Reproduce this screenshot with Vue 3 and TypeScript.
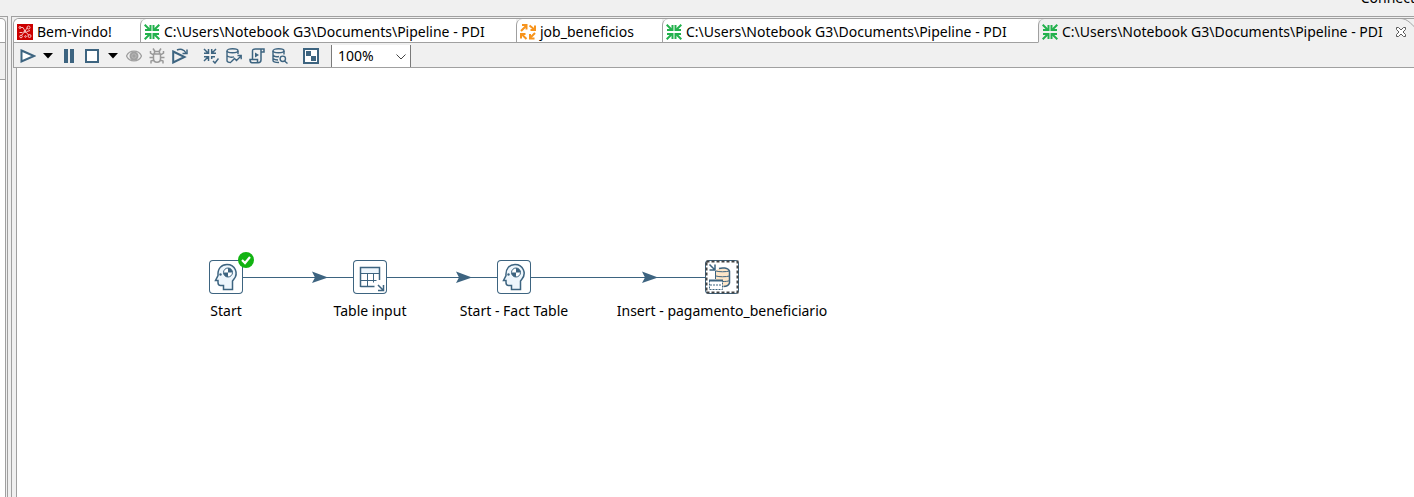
<script setup lang="ts">
import { ref } from 'vue'

type TabKind = 'welcome' | 'trans' | 'job'
interface Tab { label: string; kind: TabKind; size: string; closable?: boolean }
interface Step { label: string; icon: 'head' | 'table' | 'insert'; x: number; ok?: boolean }

const path = 'C:\\Users\\Notebook G3\\Documents\\Pipeline - PDI'
const tabs: Tab[] = [
  { label: 'Bem-vindo!', kind: 'welcome', size: 'first' },
  { label: path, kind: 'trans', size: 'path' },
  { label: 'job_beneficios', kind: 'job', size: 'job' },
  { label: path, kind: 'trans', size: 'path' },
  { label: path, kind: 'trans', size: 'last', closable: true },
]
const active = ref(4)
const zoom = ref('100%')

const steps: Step[] = [
  { label: 'Start', icon: 'head', x: 192, ok: true },
  { label: 'Table input', icon: 'table', x: 336 },
  { label: 'Start - Fact Table', icon: 'head', x: 480 },
  { label: 'Insert - pagamento_beneficiario', icon: 'insert', x: 688 },
]
const hops = [
  { from: 226, to: 336, tip: 311 },
  { from: 370, to: 480, tip: 455 },
  { from: 514, to: 688, tip: 641 },
]
</script>

<template>
  <div class="app">
    <header class="perspective"><span>Connect</span></header>
    <div class="body">
      <aside class="side">
        <div class="side-tab"></div>
        <div class="side-tools"></div>
        <div class="side-view"></div>
      </aside>
      <main class="editor">
        <nav class="tabs" aria-label="Editors">
          <button
            v-for="(tab, i) in tabs" :key="i" type="button"
            :class="['tab', tab.size, { active: active === i }]" @click="active = i"
          >
            <svg v-if="tab.kind === 'welcome'" width="16" height="16" viewBox="0 0 16 16">
              <path d="M0 0h16v16H0z" fill="#cc0000" />
              <g fill="none" stroke="#f7c4c4" stroke-width="1">
                <path d="M3.500 3.500h2.500l2 3.500M8 7l2.500-3.500M8 7l-3.500 4.500M8 7l4 4.500M2.500 8.500h3M10 7.500l3-1" />
                <circle cx="3" cy="3.500" r="1" /><circle cx="11.500" cy="3.500" r="1.500" />
                <circle cx="4" cy="12.500" r="1.300" /><circle cx="12.500" cy="12" r="1.500" /><circle cx="8" cy="7.500" r="1" /><circle cx="8.500" cy="12.500" r=".8" />
              </g>
            </svg>
            <svg v-else-if="tab.kind === 'trans'" width="16" height="16" viewBox="0 0 16 16" fill="none" stroke="#22b14c" stroke-width="2">
              <path d="M.7.7L6 6M15.300.7L10 6M.7 15.300L6 10M15.300 15.300L10 10" />
              <path d="M1 6h5.500V1M15 6H9.500V1M1 10h5.500v5M15 10H9.500v5" />
            </svg>
            <svg v-else width="16" height="16" viewBox="0 0 16 16" fill="none" stroke="#f7941d" stroke-width="2">
              <path d="M1 7L6 2M9.500 1.500L15 6M15 9L10 14M6.500 15L1.500 10" />
              <path d="M2 1h4.500v4.500M15 1.500V6h-4.500M14.500 14.500H10V10M1 14.500V10h4.500" />
            </svg>
            <span>{{ tab.label }}</span>
            <svg v-if="tab.closable" class="close" width="12" height="12" viewBox="0 0 12 12" fill="#fff" stroke="#5a5a5a">
              <path d="M1.500 1.500h2L6 4l2.500-2.500h2v2L8 6l2.500 2.500v2h-2L6 8l-2.500 2.500h-2v-2L4 6 1.500 3.500z" />
            </svg>
          </button>
          <svg class="tab-end" width="14" height="24" viewBox="0 0 14 24" fill="none" stroke="#a0a0a0"><path d="M0 .5c6 0 9 3 14 8" /></svg>
        </nav>

        <div class="toolbar" role="toolbar" aria-label="Transformation">
          <button type="button" class="t" aria-label="Run">
            <svg width="16" height="16" viewBox="0 0 16 16"><path d="M1.500 2.500L14 8 1.500 13.500z" fill="#fff" stroke="#3d6480" stroke-width="2" /></svg>
          </button>
          <button type="button" class="t arrow" aria-label="Run options"><svg width="10" height="6"><path d="M0 0h10L5 5.500z" /></svg></button>
          <button type="button" class="t" aria-label="Pause">
            <svg width="16" height="16"><path d="M3 1h4v14H3zM9 1h4v14H9z" fill="#3d6480" /></svg>
          </button>
          <button type="button" class="t stop" aria-label="Stop">
            <svg width="16" height="16"><path d="M2 2h12v12H2z" fill="#fff" stroke="#3d6480" stroke-width="2" /></svg>
          </button>
          <button type="button" class="t arrow" aria-label="Stop options"><svg width="10" height="6"><path d="M0 0h10L5 5.500z" /></svg></button>
          <button type="button" class="t" aria-label="Preview">
            <svg width="16" height="16" viewBox="0 0 16 16" fill="none" stroke="#a0a0a0">
              <path d="M.5 8C3.500 1.500 12.500 1.500 15.500 8 12.500 14.500 3.500 14.500.5 8z" stroke-width="1.300" /><circle cx="8" cy="8" r="4.500" fill="#a0a0a0" stroke="none" /><circle cx="8" cy="8" r="2.200" stroke="#c0c0c0" stroke-width=".7" />
            </svg>
          </button>
          <button type="button" class="t" aria-label="Debug">
            <svg width="16" height="16" viewBox="0 0 16 16" fill="none" stroke="#999" stroke-width="1.500">
              <path d="M4.500 6h7v4.500c0 5-7 5-7 0zM5.500 6V3.500h5V6M4 .5l2 3M12 .5l-2 3M4.500 7L1.500 5V3M11.500 7l3-2V3M4.500 9.500H.5M11.500 9.500h4M5 12l-3 1v2.500M11 12l3 1v2.500" />
            </svg>
          </button>
          <button type="button" class="t" aria-label="Replay">
            <svg width="16" height="16" viewBox="0 0 16 16" fill="none" stroke="#3d6480">
              <path d="M1.200 3.500L12.500 9 1.200 14.500z" stroke-width="2" /><path d="M5 2c3-1.500 7-1 9 3" stroke-width="1.500" /><path d="M15 1.500v4h-4.500" stroke-width="1.500" />
            </svg>
          </button>
          <button type="button" class="t verify" aria-label="Verify">
            <svg width="16" height="16" viewBox="0 0 16 16" fill="none" stroke="#3d6480" stroke-width="1.500">
              <path d="M1 1l4 4M13 1L9 5M1 13l4-4M1 5.200h4.500V1M13 5.200H8.700V1M1 8.700h4.500V13M8.700 11V8.700H12M10 13l2 2 3.500-4.500" />
            </svg>
          </button>
          <button type="button" class="t" aria-label="Impact analysis">
            <svg width="16" height="16" viewBox="0 0 16 16" fill="none" stroke="#3d6480" stroke-width="1.400">
              <ellipse cx="6.500" cy="2.800" rx="5.500" ry="2" /><path d="M1 3v9.500c0 1 1.500 2 4 2M12 3v3M1 7.500c1 2 5 2 7 1.300M5 14l3.500-3.500 2 2L15 8M11.500 7.500h3.700v3.700" />
            </svg>
          </button>
          <button type="button" class="t" aria-label="Generate SQL">
            <svg width="16" height="16" viewBox="0 0 16 16" fill="none" stroke="#3d6480" stroke-width="1.500">
              <path d="M3.500 11V3c0-2 1-2 3-2h8.500v3h-3M12 1.500V12c0 2-1 2.700-3 2.700H3c-2 0-2-1.500-2-3.200h7.500v2.500" /><path d="M6 4.500v5l4-2.500z" fill="#3d6480" stroke="none" />
            </svg>
          </button>
          <button type="button" class="t explore" aria-label="Explore database">
            <svg width="16" height="16" viewBox="0 0 16 16" fill="none" stroke="#3d6480" stroke-width="1.400">
              <ellipse cx="6.500" cy="2.800" rx="5.500" ry="2" /><path d="M1 3v9.500c0 1 2 2 6 2M12 3v3.500M1 7c1 1.500 4 2 6 1.500M1 10.500c1 1 3 1.500 5 1.500M12.500 13l3 2.500" /><circle cx="10.800" cy="10.800" r="2.700" />
            </svg>
          </button>
          <button type="button" class="t results" aria-label="Show results">
            <svg width="16" height="16"><path d="M1 1h14v14H1z" fill="#fff" stroke="#3d6480" stroke-width="2" /><path d="M3 3h5v5H3zM8 8h5v5H8z" fill="#3d6480" /></svg>
          </button>
          <label class="zoom">
            <select v-model="zoom" aria-label="Zoom"><option>200%</option><option>100%</option><option>50%</option></select>
            <svg width="10" height="6" viewBox="0 0 10 6" fill="none" stroke="#444"><path d="M.5.5L5 5 9.500.5" /></svg>
          </label>
        </div>

        <section class="canvas" aria-label="Transformation graph">
          <svg class="hops" width="900" height="20">
            <g v-for="hop in hops" :key="hop.from" fill="#3d6480">
              <path :d="`M${hop.from} 9.500H${hop.to}`" stroke="#3d6480" />
              <path :d="`M${hop.tip} 9.500l-16-6 3 6-3 5.500z`" />
            </g>
          </svg>
          <div v-for="step in steps" :key="step.x" class="step" :style="{ left: `${step.x}px` }">
            <div class="box">
              <svg v-if="step.icon === 'head'" width="34" height="34" viewBox="0 0 34 34">
                <path d="M14.500 29.500v-4h-3c-2 0-2.500-1-2.500-3v-2H6.500L9 15.500C8.500 8.500 12.500 4.500 18 4.500c8.500 0 11.500 9 7 14.500L23.500 21v8.500z" fill="#eef6fc" stroke="#3d6480" stroke-width="1.500" />
                <circle cx="19" cy="12.500" r="4.500" fill="#fff" stroke="#3d6480" /><path d="M19 12.500V8a4.500 4.500 0 0 1 4.500 4.500zM19 12.500V17a4.500 4.500 0 0 1-4.500-4.500z" fill="#3d6480" />
                <circle cx="11.500" cy="14.500" r="1.200" fill="#3d6480" />
              </svg>
              <svg v-else-if="step.icon === 'table'" width="34" height="34" viewBox="0 0 34 34" fill="none" stroke="#3d6480">
                <path d="M8 8h18v5H8z" fill="#eef6fc" stroke="none" /><path d="M7.500 13.500h19M7.500 20.500h16M14.500 13.500v13M20.500 13.500v9" stroke-width="1" />
                <path d="M7.500 27V7.500h19V20M7.500 26.500h14" stroke-width="1.500" /><path d="M25 25l5 5M30.500 25v5.500H25" stroke-width="1.500" />
              </svg>
              <svg v-else width="34" height="34" viewBox="0 0 34 34" fill="none" stroke="#3d6480">
                <path d="M10.500 20V11c3-4 11-4 14 0v13c-1 2-3 3-6 3" fill="#fce5c8" stroke="none" />
                <path d="M14 8.500c3-1 9-1 10.500 2.500v12c-1 3-3 3.500-6 3.500" stroke-width="1.500" /><path d="M10.500 19v-8M11 11c3 1 10 1 13.500 0M11 16c3 1 10 1 13.500 0M17 21.500c3 0 6 0 7.500-1" />
                <path d="M4.500 20.500h13v9h-13z" fill="#fff" stroke-dasharray="2 1" /><path d="M5 25h12" stroke-dasharray="2 1" /><path d="M4 20.500h14" stroke-width="2" />
                <path d="M4.500 4.500l5 5M10 4.500V10H4.500" stroke-width="1.500" />
                <rect x="1.500" y="1.500" width="31" height="31" stroke="#444" stroke-width="2" stroke-dasharray="3 2" />
              </svg>
              <svg v-if="step.ok" class="ok" width="16" height="16"><circle cx="8" cy="8" r="8" fill="#12b312" /><path d="M4 8l3 3 5-6" fill="none" stroke="#fff" stroke-width="2.200" /></svg>
            </div>
            <span class="name">{{ step.label }}</span>
          </div>
        </section>
      </main>
    </div>
  </div>
</template>

<style>
body { margin: 0; }
</style>

<style scoped>
.app { height: 100vh; display: flex; flex-direction: column; background: #f0f0f0; color: #000; font: 14px/20px "Noto Sans", "Open Sans", sans-serif; overflow: hidden; }
button { padding: 0; border: 0; background: none; font: inherit; color: inherit; }
svg { display: block; flex: none; }
.perspective { flex: none; height: 16px; display: flex; align-items: flex-end; justify-content: flex-end; overflow: hidden; }
.perspective span { height: 28px; margin-right: -1px; }
.body { flex: 1; min-height: 0; display: flex; gap: 3px; }
.side { flex: none; width: 8px; box-sizing: border-box; display: flex; flex-direction: column; border-top: 1px solid #a0a0a0; border-right: 1px solid #a0a0a0; }
.side-tab { height: 25px; width: 6px; margin-top: 1px; box-sizing: border-box; background: #fff; border: solid #a0a0a0; border-width: 1px 1px 1px 0; border-top-right-radius: 5px; }
.side-tools { height: 37px; width: 6px; box-sizing: border-box; border-right: 1px solid #a0a0a0; border-bottom: 1px solid #a0a0a0; }
.side-view { flex: 1; width: 6px; box-sizing: border-box; border-right: 1px solid #a0a0a0; background: #fff; }
.editor { flex: 1; min-width: 0; display: flex; flex-direction: column; border-top: 1px solid #a0a0a0; border-left: 1px solid #a0a0a0; padding: 1px 0 0 1px; }
.tabs { flex: none; height: 25px; display: flex; box-sizing: border-box; position: relative; border-left: 1px solid #a0a0a0; border-top: 1px solid #a0a0a0; border-top-left-radius: 6px; overflow: hidden; }
.tab { flex: none; display: flex; align-items: center; gap: 4px; padding: 2px 0 0 3px; box-sizing: border-box; background: #fff; border: 0 solid #a0a0a0; border-bottom-width: 1px; white-space: nowrap; }
.tab + .tab { border-left-width: 1px; border-top-left-radius: 6px; }
.first { width: 126px; }
.path { width: 376px; }
.job { width: 146px; }
.last { flex: 1; }
.active { background: #f0f0f0; border-bottom-color: #f0f0f0; }
.close { margin-left: 8px; }
.tab-end { position: absolute; top: -1px; right: 0; }
.toolbar { flex: none; height: 25px; box-sizing: border-box; display: flex; align-items: center; padding: 2px 0 0 6px; border-left: 1px solid #a0a0a0; border-bottom: 1px solid #a0a0a0; }
.t { flex: none; margin-right: 7px; }
.arrow { margin-right: 8px; }
.stop { margin-right: 8px; }
.verify { margin-left: 8px; }
.explore { margin-right: 15px; }
.results { margin-right: 12px; }
.zoom { position: relative; width: 80px; height: 22px; box-sizing: border-box; align-self: flex-end; background: #fff; border: solid #7a7a7a; border-width: 0 1px; }
.zoom select { display: block; appearance: none; width: 100%; height: 22px; padding: 0 0 0 6px; border: 0; background: none; font: inherit; }
.zoom svg { position: absolute; right: 4px; top: 9px; pointer-events: none; }
.canvas { flex: 1; position: relative; margin-left: 3px; border-left: 1px solid #a0a0a0; background: #fff; }
.hops { position: absolute; left: 0; top: 200px; }
.step { position: absolute; top: 192px; width: 34px; display: flex; flex-direction: column; align-items: center; gap: 7px; }
.box { position: relative; width: 34px; height: 34px; box-sizing: border-box; border-radius: 4px; background: #fff; box-shadow: inset 0 0 0 1px #3d6480; }
.ok { position: absolute; left: 29px; top: -8px; }
.name { white-space: nowrap; }
</style>
